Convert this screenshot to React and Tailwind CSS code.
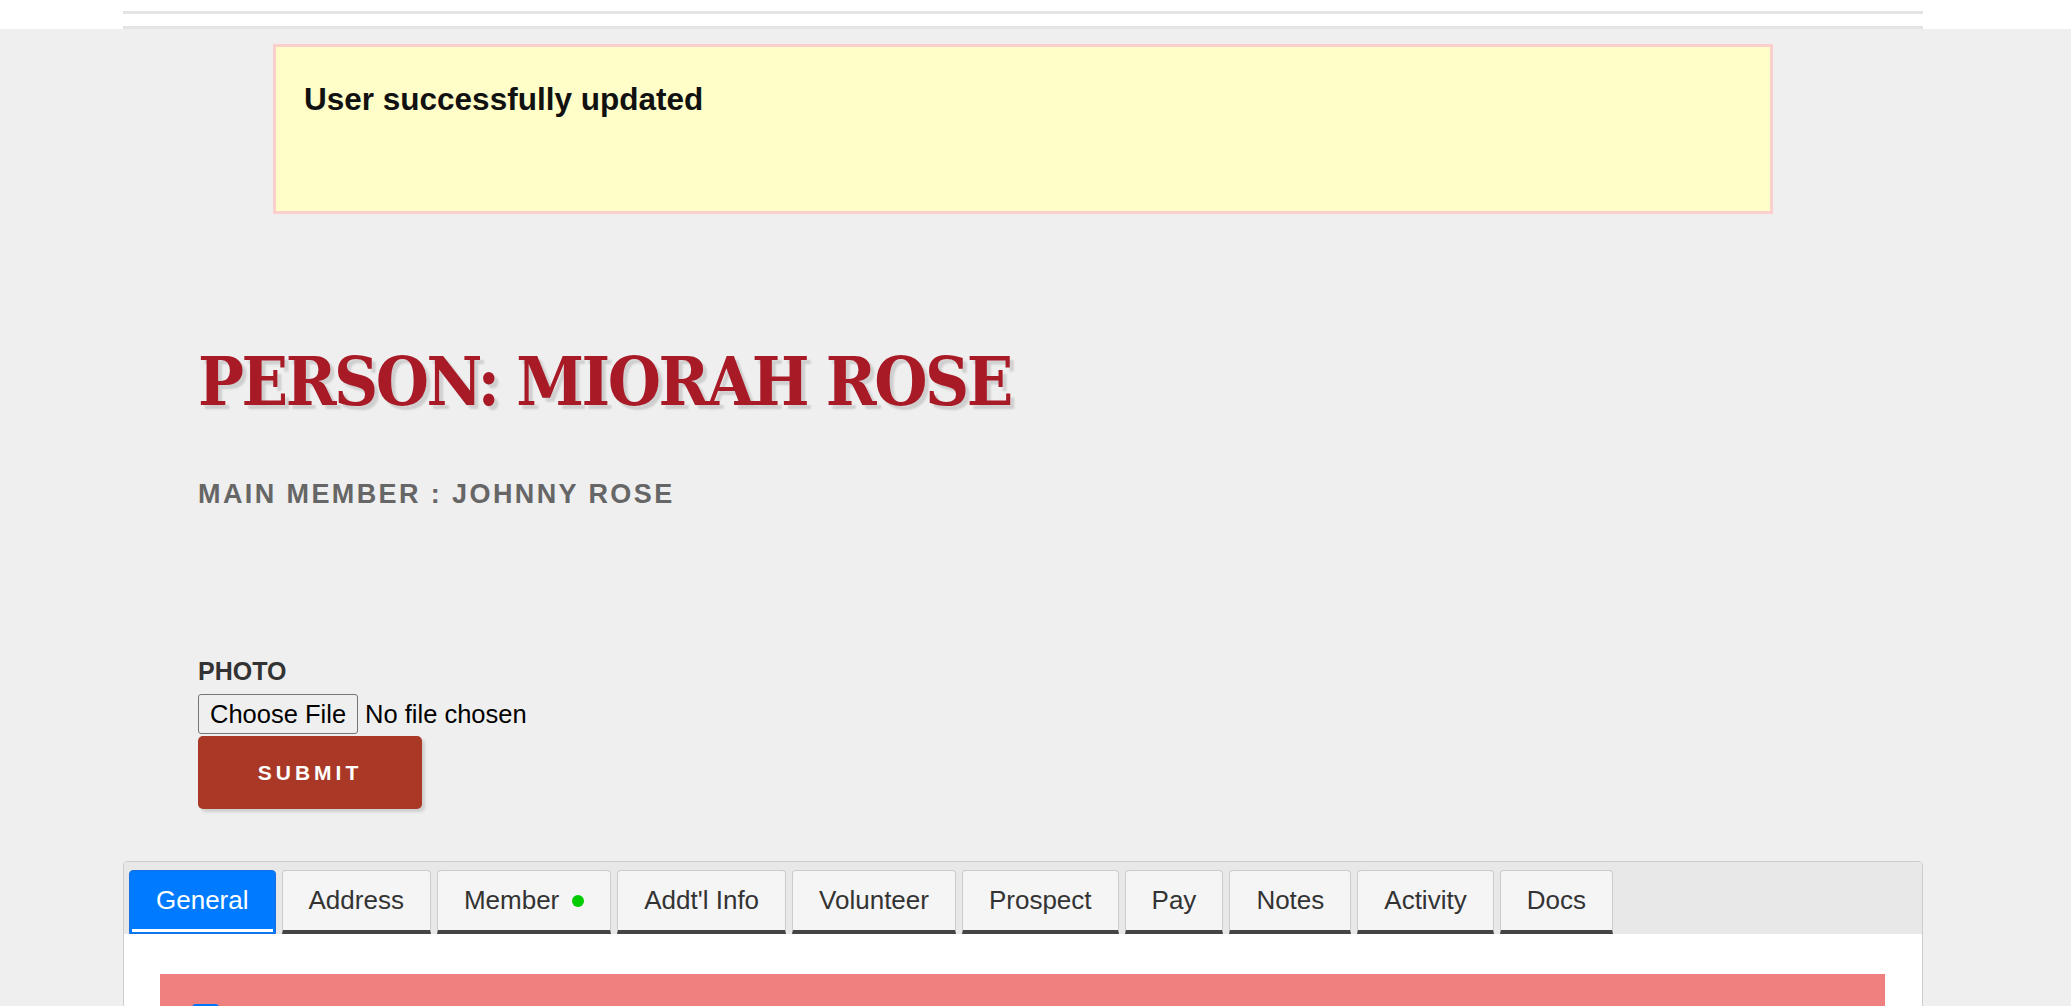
const tabs = [
    { label: "General", active: true },
    { label: "Address" },
    { label: "Member", dot: true },
    { label: "Addt'l Info" },
    { label: "Volunteer" },
    { label: "Prospect" },
    { label: "Pay" },
    { label: "Notes" },
    { label: "Activity" },
    { label: "Docs" },
];

const App = () => {
    return (
        <div className="min-h-screen bg-[#efefef] font-['Liberation_Sans',Arial,sans-serif]">
            {/* Top bar */}
            <header className="bg-white h-[29px]">
                <div className="w-[1800px] ml-[123px] pt-[11px]">
                    <div className="h-[3px] bg-[#e4e4e4]"></div>
                    <div className="h-[12px]"></div>
                    <div className="h-[3px] bg-[#e4e4e4]"></div>
                </div>
            </header>

            <main className="w-[1800px] ml-[123px]">
                {/* Flash message */}
                <div className="mt-[15px] mx-auto w-[1500px] h-[170px] border-[3px] border-[#fbd0cc] bg-[#fffdc8] pl-[28px] pt-[34px]">
                    <p className="text-[31.5px] leading-[36px] font-bold text-[#111]">User successfully updated</p>
                </div>

                {/* Title */}
                <div className="px-[75px]">
                    <h1 className="mt-[127px] font-['DejaVu_Serif',serif] [font-stretch:condensed] font-bold text-[68px] leading-[80px] tracking-[-2.5px] text-[#a91a27] [text-shadow:4px_4px_2px_#cfcfcf]">
                        PERSON: MIORAH ROSE
                    </h1>
                    <h2 className="mt-[57px] text-[27px] leading-[32px] font-bold tracking-[2.4px] text-[#666]">
                        MAIN MEMBER : JOHNNY ROSE
                    </h2>

                    {/* Photo form */}
                    <form className="mt-[146px]">
                        <label className="block text-[25px] leading-[30px] font-bold text-[#333]">PHOTO</label>
                        <div className="flex items-center mt-[8px] h-[40px]">
                            <button type="button" className="h-[40px] px-[11px] bg-[#efefef] border border-[#767676] rounded-[3px] text-[25.5px] text-black">
                                Choose File
                            </button>
                            <span className="ml-[7px] text-[25.5px] text-black">No file chosen</span>
                        </div>
                        <button type="button" className="mt-[2px] w-[224px] h-[73px] bg-[#a93826] rounded-[5px] shadow-[3px_3px_3px_#cfcfcf] text-white font-bold text-[21px] tracking-[4px]">
                            SUBMIT
                        </button>
                    </form>
                </div>

                {/* Tabs */}
                <div className="mt-[52px] border border-[#cccccc] rounded-[4px] bg-white">
                    <div className="flex gap-[6px] bg-[#e8e8e8] pl-[5px] pt-[8px] rounded-t-[4px]">
                        {tabs.map((tab, index) =>
                            tab.active ? (
                                <div key={index} className="flex flex-col h-[64px] border border-[#1a6fe0] bg-[#007bff] rounded-t-[4px]">
                                    <div className="flex-1 flex items-center px-[26px] text-[26px] text-white">{tab.label}</div>
                                    <div className="h-[3px] mx-[2px] mb-[1px] bg-white"></div>
                                </div>
                            ) : (
                                <div key={index} className="flex items-center gap-[13px] h-[64px] px-[26px] border border-[#cccccc] border-b-4 border-b-[#444] bg-[#f5f5f5] rounded-t-[4px] text-[26px] text-[#333]">
                                    <span>{tab.label}</span>
                                    {tab.dot && <span className="w-[12px] h-[12px] rounded-full bg-[#00cc00]"></span>}
                                </div>
                            )
                        )}
                    </div>

                    {/* Tab content */}
                    <div className="pt-[40px] pl-[36px] pr-[37px] pb-[40px]">
                        <div className="h-[200px] bg-[#f08080] pt-[30px] pl-[32px]">
                            <div className="w-[27px] h-[27px] rounded-[4px] bg-[#0075ff]"></div>
                        </div>
                    </div>
                </div>
            </main>
        </div>
    );
};

export default App;
